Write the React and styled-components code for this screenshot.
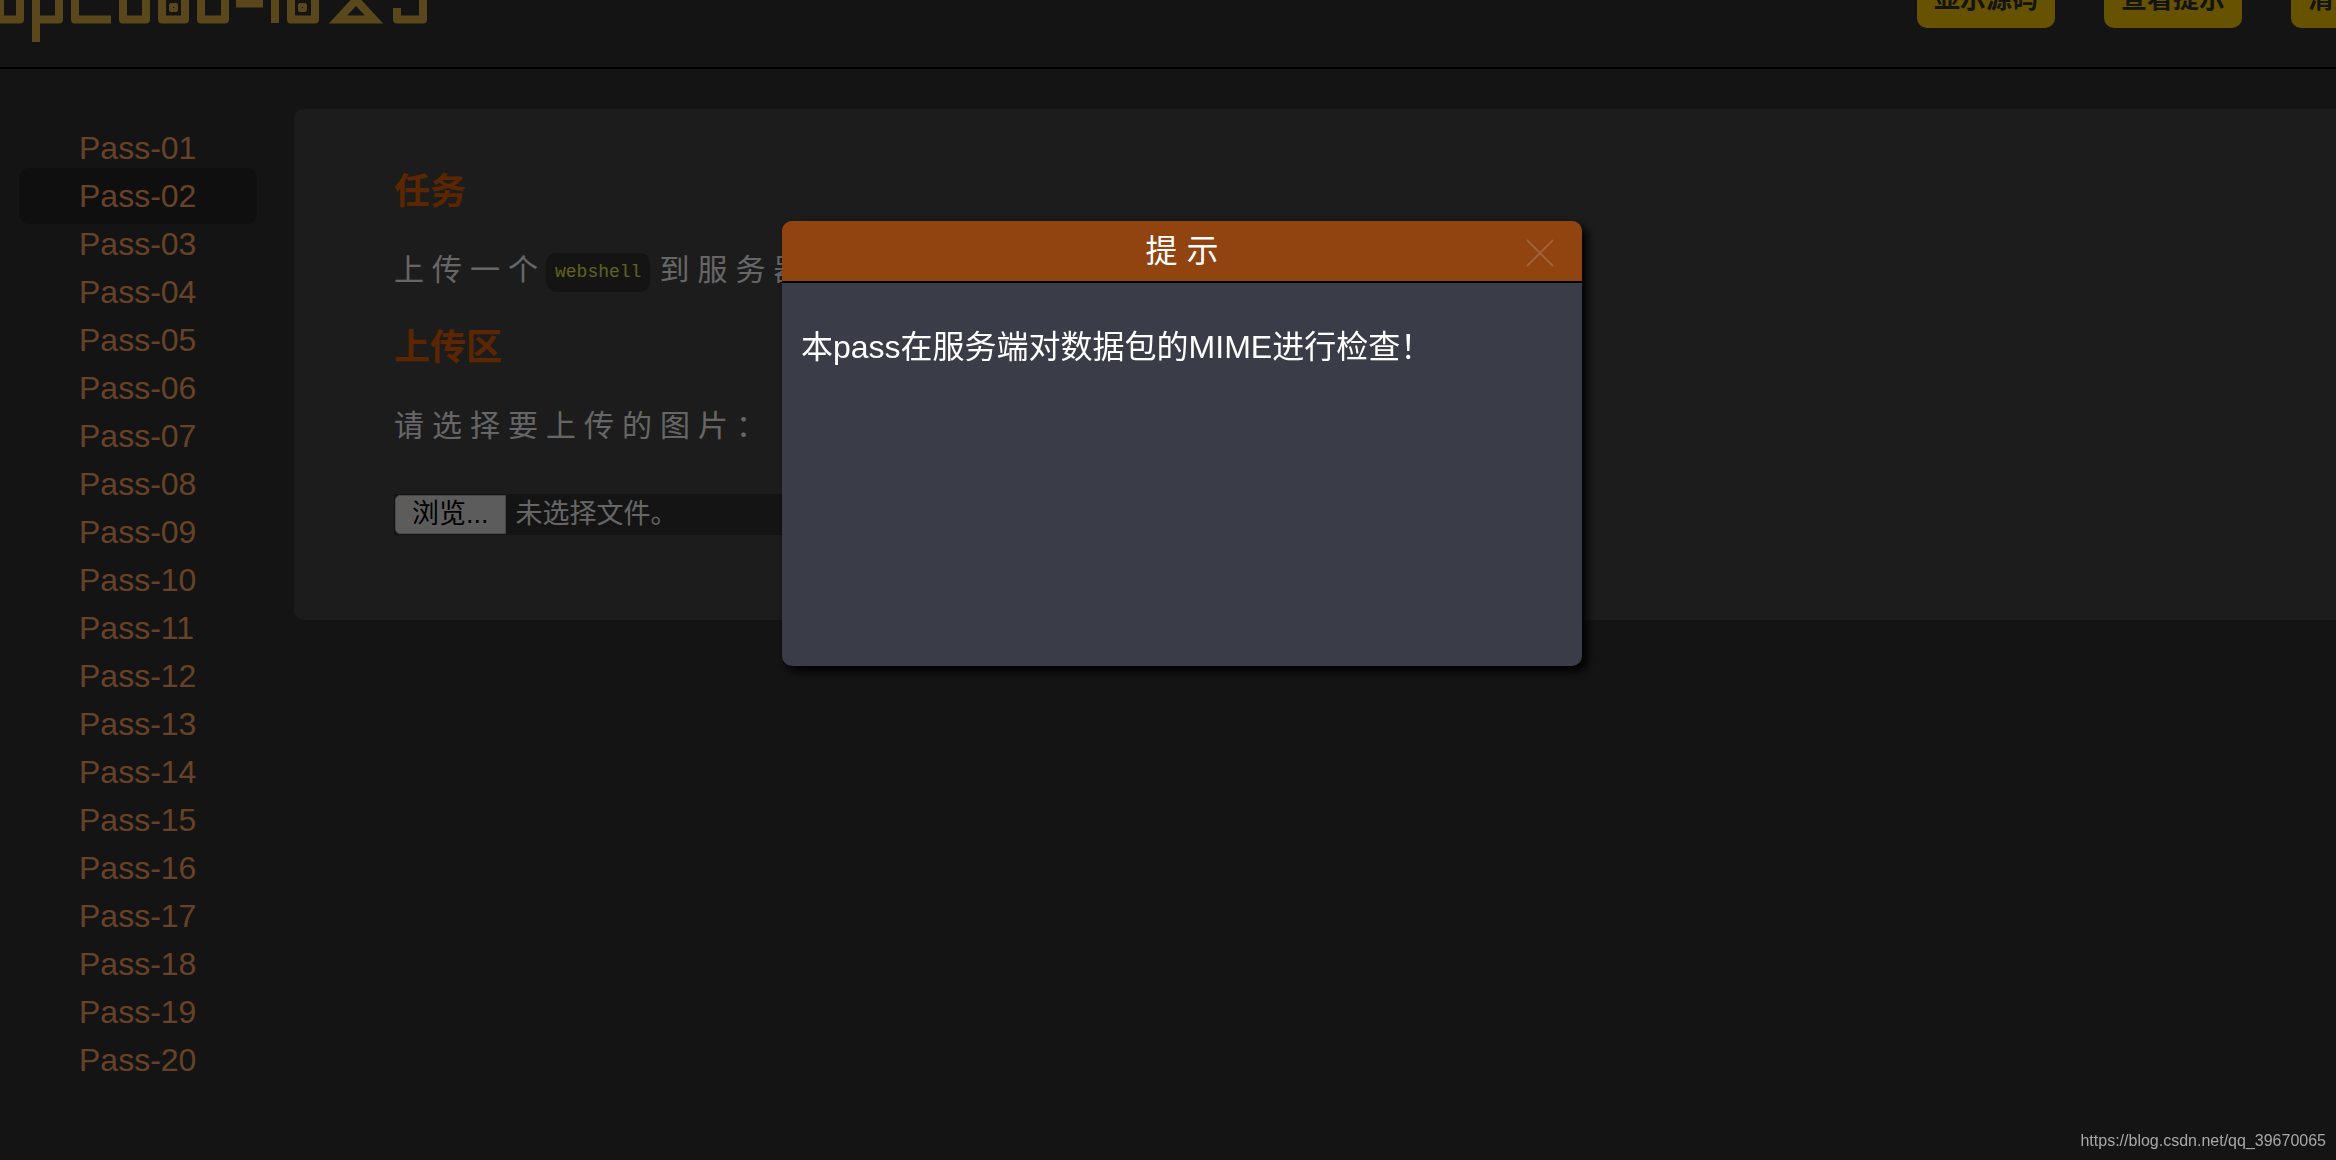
import React, { useState } from "react";
import styled, { createGlobalStyle } from "styled-components";

const GlobalStyle = createGlobalStyle`
    * {
        box-sizing: border-box;
    }
    body {
        margin: 0;
        background-color: #323232;
        color: #fff;
        font-family: "Liberation Sans", "Noto Sans CJK SC", sans-serif;
        overflow: hidden;
    }
    a {
        color: inherit;
        text-decoration: none;
    }
    button {
        font-family: inherit;
        border: none;
        cursor: pointer;
    }
`;

const Viewport = styled.div`
    min-height: 100vh;
    overflow: hidden;
`;

const Page = styled.div`
    width: calc(100% + 160px);
`;

const Header = styled.header`
    height: 69px;
    display: flex;
    align-items: flex-end;
    justify-content: space-between;
    border-bottom: 2px solid #000;
`;

const LogoSvg = styled.svg`
    display: block;
    margin-bottom: 24px;
    fill: none;
    stroke: #e1b446;
    stroke-width: 8;
    stroke-linejoin: round;
`;

const Actions = styled.nav`
    display: flex;
    gap: 49px;
    padding: 0 15px 39px 0;
`;

const Action = styled.button`
    height: 62px;
    padding: 3px 17px 0;
    border-radius: 10px;
    background-color: #ffcc00;
    color: #323232;
    font-size: 26px;
    font-weight: 700;
    line-height: 30px;
    white-space: nowrap;
`;

const Body = styled.div`
    display: flex;
    align-items: flex-start;
    padding-top: 40px;
`;

const Menu = styled.ul`
    flex-shrink: 0;
    width: 294px;
    margin: 0;
    padding: 15px 37px 0 19px;
    list-style: none;
`;

const MenuItem = styled.li`
    display: flex;
    align-items: center;
    height: 48px;
`;

const MenuLink = styled.a`
    flex: 1;
    padding: 4px 0 4px 60px;
    border-radius: 10px;
    background-color: ${props => (props.$active ? "#262626" : "transparent")};
    line-height: 48px;
    font-size: 32px;
    && {
        color: #ffa562;
    }
`;

const Panel = styled.main`
    flex: 1;
    padding: 63px 100px 85px;
    border-radius: 10px;
    background-color: #464646;
`;

const Title = styled.h3`
    margin: 0 0 38px;
    color: #e65f00;
    font-size: 36px;
    line-height: 40px;
`;

const Text = styled.p`
    margin: 0 0 38px;
    font-size: 30px;
    line-height: 40px;
    letter-spacing: 8px;
`;

const Code = styled.code`
    display: inline-block;
    margin: -4px 9px -4px 0;
    padding: 0 9px;
    border-radius: 10px;
    background-color: #323232;
    color: #f0f050;
    font-family: "Liberation Mono", monospace;
    font-size: 18px;
    line-height: 39px;
    letter-spacing: 0;
    vertical-align: middle;
`;

const FileField = styled.label`
    display: flex;
    align-items: center;
    width: 560px;
    margin-top: 48px;
    padding: 1px;
    background-color: #323232;
    font-size: 27px;
    line-height: 37px;
    cursor: pointer;
    input {
        position: absolute;
        opacity: 0;
        width: 1px;
        height: 1px;
    }
`;

const Browse = styled.span`
    margin-right: 10px;
    padding: 0 16px;
    border: 1px solid #b4b4b4;
    border-radius: 5px 0 0 5px;
    background-color: #e6e6e6;
    color: #000;
`;

const Overlay = styled.div`
    position: fixed;
    top: 0;
    left: 0;
    right: 0;
    bottom: 0;
    display: flex;
    justify-content: center;
    align-items: flex-start;
    padding: 221px 0 0 28px;
    background-color: rgba(0, 0, 0, 0.6);
`;

const Dialog = styled.section`
    width: 800px;
    border-radius: 10px;
    background-color: #3a3d48;
    box-shadow: 5px 5px 10px #000;
    overflow: hidden;
`;

const DialogHeader = styled.header`
    display: grid;
    grid-template-columns: 60px 1fr 60px;
    align-items: center;
    padding: 0 12px;
    border-bottom: 2px solid #000;
    background-color: #914310;
`;

const DialogTitle = styled.h2`
    grid-column: 2;
    margin: 0;
    font-size: 32px;
    font-weight: 400;
    line-height: 60px;
    text-align: center;
`;

const Close = styled.button`
    display: flex;
    justify-content: center;
    align-items: center;
    height: 60px;
    padding: 4px 0 0;
    background: none;
    svg {
        stroke: #a0623a;
        stroke-width: 2;
    }
`;

const DialogBody = styled.div`
    min-height: 383px;
    padding: 40px 19px;
    font-size: 32px;
    line-height: 48px;
`;

const Watermark = styled.a`
    position: fixed;
    right: 10px;
    bottom: 9px;
    font-size: 16px;
    line-height: 20px;
    && {
        color: #a8a8a8;
    }
`;

const passes = Array.from({ length: 20 }, (_, i) => `Pass-${String(i + 1).padStart(2, "0")}`);

const Logo = () => (
    <LogoSvg width="428" height="99" viewBox="0 -56 428 99" role="img" aria-label="upload-labs">
        <polyline points="0,-20 0,19.5 20,19.5 20,-20" />
        <polyline points="36,42 36,-16 59,-16 59,19.5 36,19.5" />
        <polyline points="75,-38 75,19.5 111,19.5" />
        <rect x="123" y="-16" width="23" height="35.5" />
        <rect x="162" y="-16" width="23" height="35.5" />
        <rect x="171" y="5" width="5" height="5" strokeWidth="4" />
        <rect x="201" y="-16" width="24" height="35.5" />
        <line x1="236" y1="3.5" x2="263" y2="3.5" />
        <line x1="275" y1="-38" x2="275" y2="23" />
        <rect x="291" y="-16" width="24" height="35.5" />
        <rect x="300" y="5" width="5" height="5" strokeWidth="4" />
        <polygon points="338,19.5 374,19.5 356,0" strokeLinejoin="miter" />
        <polyline points="397,8 397,19.5 423,19.5 423,-20" />
    </LogoSvg>
);

export default () => {
    const [fileName, setFileName] = useState("");
    const [open, setOpen] = useState(true);

    return (
        <Viewport>
            <GlobalStyle />
            <Page>
                <Header>
                    <Logo />
                    <Actions>
                        <Action>显示源码</Action>
                        <Action>查看提示</Action>
                        <Action>清空上传文件</Action>
                    </Actions>
                </Header>
                <Body>
                    <Menu>
                        {passes.map(name => (
                            <MenuItem key={name}>
                                <MenuLink href={`#${name}`} $active={name === "Pass-02"}>{name}</MenuLink>
                            </MenuItem>
                        ))}
                    </Menu>
                    <Panel>
                        <Title>任务</Title>
                        <Text>上传一个<Code>webshell</Code>到服务器。</Text>
                        <Title>上传区</Title>
                        <Text>请选择要上传的图片：</Text>
                        <FileField>
                            <input type="file" onChange={e => setFileName(e.target.value)} />
                            <Browse>浏览...</Browse>
                            {fileName || "未选择文件。"}
                        </FileField>
                    </Panel>
                </Body>
            </Page>
            {open && (
                <Overlay>
                    <Dialog role="dialog" aria-labelledby="dialog-title">
                        <DialogHeader>
                            <DialogTitle id="dialog-title">提 示</DialogTitle>
                            <Close aria-label="关闭" onClick={() => setOpen(false)}>
                                <svg width="28" height="28" viewBox="0 0 28 28">
                                    <path d="M1 1 L27 27 M27 1 L1 27" />
                                </svg>
                            </Close>
                        </DialogHeader>
                        <DialogBody>本pass在服务端对数据包的MIME进行检查！</DialogBody>
                    </Dialog>
                </Overlay>
            )}
            <Watermark href="https://blog.csdn.net/qq_39670065">https://blog.csdn.net/qq_39670065</Watermark>
        </Viewport>
    );
};
